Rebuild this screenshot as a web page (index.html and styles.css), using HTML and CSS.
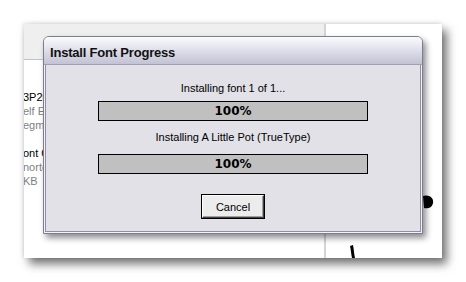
FILE: index.html
```html
<!DOCTYPE html>
<html lang="en">
<head>
  <meta charset="UTF-8" />
  <title>Install Font Progress</title>
  <link rel="stylesheet" href="styles.css">
</head>
<body>
  <div class="desk">
    <div class="app">
      <div class="pane-left">
        <div class="pane-head"></div>
        <div class="list">
          <div class="item">
            <div class="name">3P2006</div>
            <div class="sub">elf Ex</div>
            <div class="sub">egmo</div>
          </div>
          <div class="item">
            <div class="name">ont C</div>
            <div class="sub">norte</div>
            <div class="sub">KB</div>
          </div>
        </div>
      </div>
      <div class="pane-right">
        <svg class="glyph" width="116" height="234" viewBox="0 0 116 234">
          <path d="M97 172 C103 170 108 174 107 179 C106 184 101 185 98 184 Z" fill="#000"/>
          <path d="M24 222 C25 226 25 230 26 234 L29 234 C28 230 28 226 27 221 Z" fill="#000"/>
        </svg>
      </div>
    </div>

    <div class="dialog">
      <div class="titlebar">Install Font Progress</div>
      <div class="client">
        <div class="msg">Installing font 1 of 1...</div>
        <div class="bar first">100%</div>
        <div class="msg second">Installing A Little Pot (TrueType)</div>
        <div class="bar">100%</div>
        <button class="btn">Cancel</button>
      </div>
    </div>
  </div>
</body>
</html>
```

FILE: styles.css
```css
body {
  margin: 0;
  background: #fff;
  font-family: "Liberation Sans", Arial, sans-serif;
}
.desk {
  position: relative;
  width: 466px;
  height: 282px;
  padding: 24px;
  box-sizing: border-box;
}
.app {
  width: 418px;
  height: 234px;
  display: flex;
  background: #fff;
  box-shadow: 5px 6px 9px rgba(0, 0, 0, 0.55), -1px -1px 4px rgba(0, 0, 0, 0.12);
  overflow: hidden;
}
.pane-left {
  width: 300px;
  border-right: 2px solid #d4d4d8;
  background: #fff;
}
.pane-head {
  height: 35px;
  background: #efefef;
  border-bottom: 1px solid #b8c4d0;
}
.list {
  padding-top: 30px;
  font-size: 11px;
  line-height: 14px;
  margin-left: -1px;
}
.item {
  margin-bottom: 14px;
}
.name {
  color: #000;
}
.sub {
  color: #808080;
}
.pane-right {
  flex: 1;
  background: #fff;
}
.glyph {
  display: block;
}
.dialog {
  position: absolute;
  left: 43px;
  top: 36px;
  width: 378px;
  height: 196px;
  border: 1px solid #7c7c92;
  border-radius: 6px 6px 0 0;
  background: #f2f2f6;
  box-shadow: 3px 4px 6px rgba(0, 0, 0, 0.45);
  display: flex;
  flex-direction: column;
}
.titlebar {
  height: 25px;
  padding-top: 2px;
  line-height: 28px;
  padding-left: 6px;
  font-family: "Liberation Sans", Arial, sans-serif;
  font-weight: bold;
  font-size: 13px;
  letter-spacing: -0.2px;
  color: #111;
  border-radius: 5px 5px 0 0;
  background: linear-gradient(#fbfbfd, #e4e4ee 40%, #c2c2d4);
  border-bottom: 1px solid #a0a0b4;
}
.client {
  flex: 1;
  margin: 0 1px 1px 1px;
  border: 1px solid #8e8ea4;
  border-top: none;
  background: #e1e1e7;
  display: flex;
  flex-direction: column;
  align-items: center;
  padding-top: 17px;
}
.msg {
  font-size: 11px;
  line-height: 13px;
  color: #000;
}
.msg.second {
  margin-top: 10px;
}
.bar {
  width: 268px;
  height: 18px;
  border: 1px solid #000;
  background: #c0c0c0;
  text-align: center;
  font-family: "DejaVu Sans", sans-serif;
  font-weight: bold;
  font-size: 12px;
  line-height: 18px;
  margin-top: 10px;
}
.bar.first {
  margin-top: 6px;
}
.btn {
  margin-top: 21px;
  width: 62px;
  height: 23px;
  padding: 0;
  font-family: "Liberation Sans", Arial, sans-serif;
  font-size: 11px;
  color: #000;
  background: #ececec;
  border: 1px solid;
  border-color: #fff #404040 #404040 #fff;
  box-shadow: inset -1px -1px 0 #a0a0a0, 0 0 0 1px #000;
}
```
